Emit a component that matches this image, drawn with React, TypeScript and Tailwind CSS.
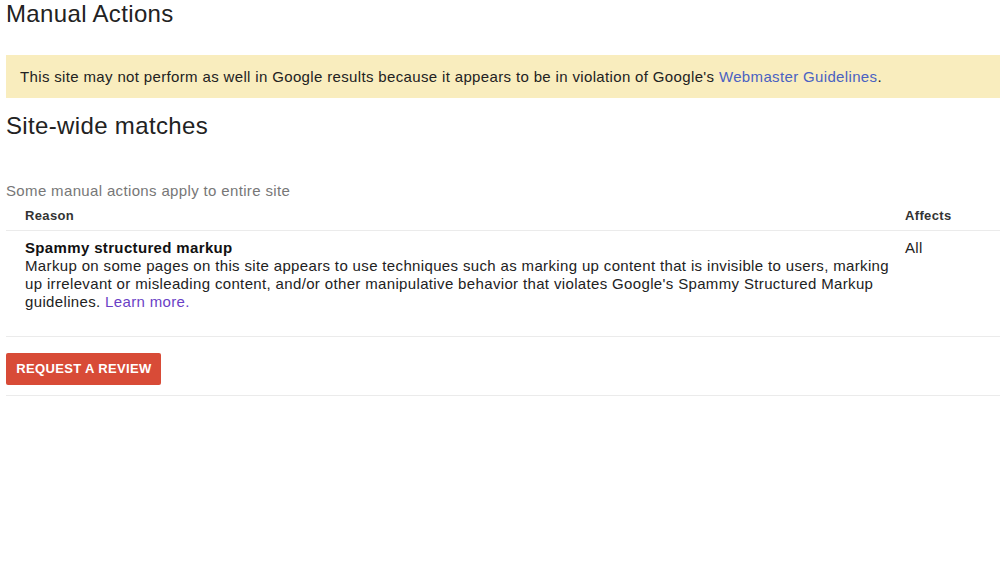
import React from 'react';

const ROWS = [
  {
    title: 'Spammy structured markup',
    text: "Markup on some pages on this site appears to use techniques such as marking up content that is invisible to users, marking up irrelevant or misleading content, and/or other manipulative behavior that violates Google's Spammy Structured Markup guidelines.",
    affects: 'All',
  },
];

export default function App() {
  return (
    <div className="min-h-[587px] bg-white pl-[6px] text-[#222] tracking-[0.35px] font-['Liberation_Sans',Arial,sans-serif]">
      <h1 className="text-[24px] leading-[28px] font-normal text-[#222]">Manual Actions</h1>

      {/* warning banner */}
      <div className="mt-[27px] h-[43px] flex items-center bg-[#f9edbe] pl-[14px] pt-[2px] text-[15px] text-[#222]">
        <p>
          This site may not perform as well in Google results because it appears to be in violation of Google's{' '}
          <a href="#" className="text-[#4a62c2]">Webmaster Guidelines</a>.
        </p>
      </div>

      <h2 className="mt-[14px] text-[24px] leading-[28px] font-normal text-[#222]">Site-wide matches</h2>

      <p className="mt-[42px] text-[15px] leading-[18px] text-[#777]">Some manual actions apply to entire site</p>

      {/* table */}
      <div className="grid grid-cols-[1fr_95px] border-b border-[#ebebeb]">
        <div className="pl-[19px] pt-[8px] pb-[7px] text-[13px] leading-[15px] font-bold text-[#333] border-b border-[#ebebeb]">Reason</div>
        <div className="pt-[8px] pb-[7px] text-[13px] leading-[15px] font-bold text-[#333] border-b border-[#ebebeb]">Affects</div>
        {ROWS.map(r => (
          <React.Fragment key={r.title}>
            <div className="pl-[19px] pr-[6px] pt-[8px] pb-[25px] text-[15px] leading-[18px]">
              <p className="font-bold text-[#111]">{r.title}</p>
              <p className="text-[#222]">
                {r.text} <a href="#" className="text-[#6a3fc6]">Learn more.</a>
              </p>
            </div>
            <div className="pt-[8px] text-[15px] leading-[18px] text-[#222]">{r.affects}</div>
          </React.Fragment>
        ))}
      </div>

      <div className="pt-[16px] pb-[10px] border-b border-[#ebebeb]">
        <button className="h-[32px] w-[155px] rounded-[2px] bg-[#d84b37] pl-[1px] text-white text-[13px] font-bold uppercase">
          Request a review
        </button>
      </div>
    </div>
  );
}
